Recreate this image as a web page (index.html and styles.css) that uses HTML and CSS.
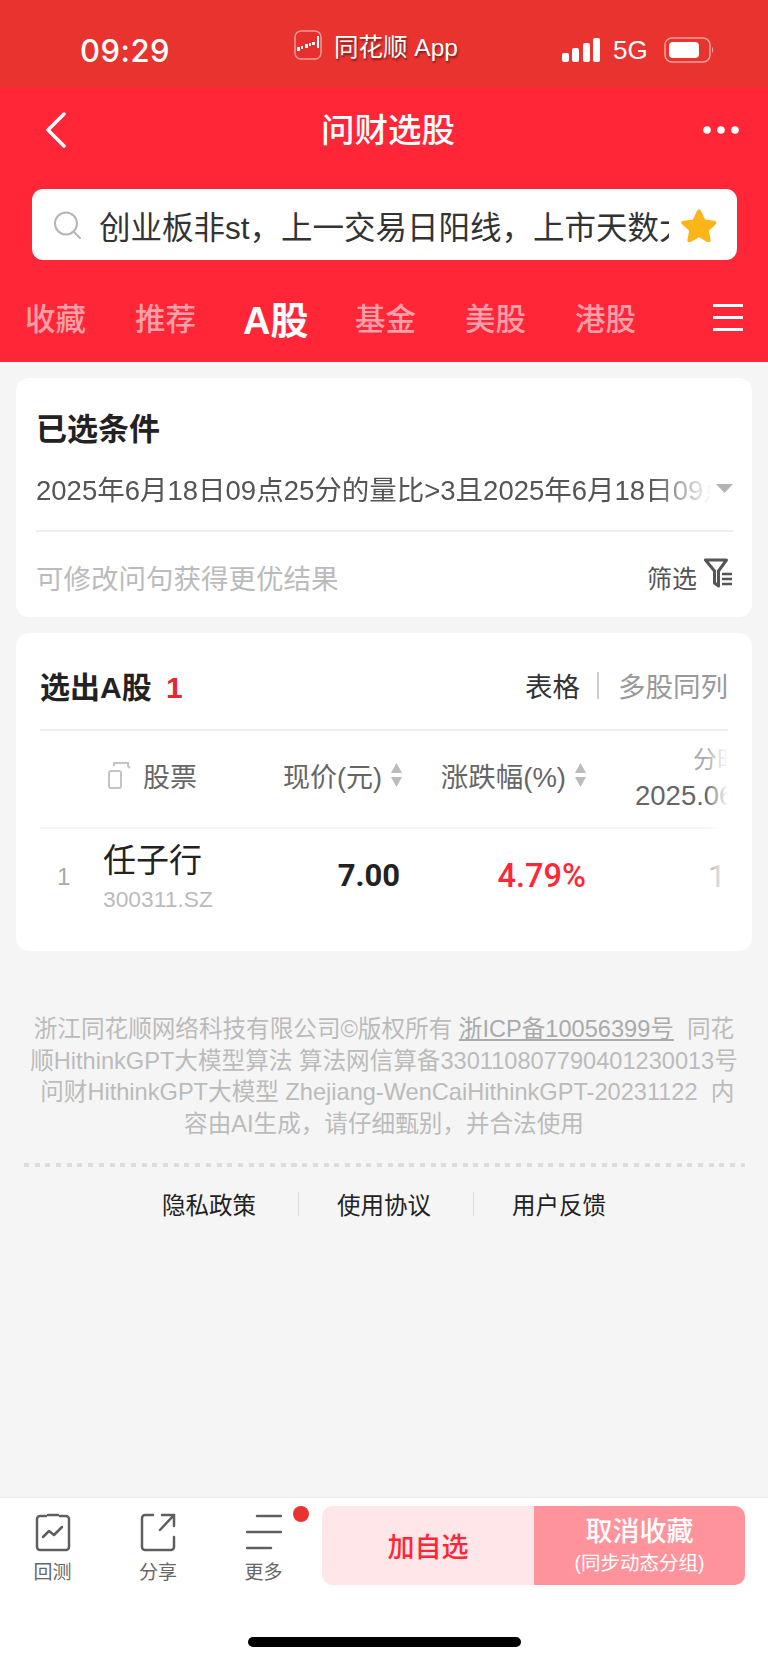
FILE: index.html
```html
<!DOCTYPE html>
<html>
<head>
<meta charset="UTF-8">
<meta name="viewport" content="width=768">
<title>问财选股</title>
<link rel="stylesheet" href="styles.css">
</head>
<body>
<div class="page">

<div class="status">
  <span class="time">09:29</span>
  <svg class="app-logo" width="28" height="30" viewBox="0 0 28 30">
    <rect x="1" y="1" width="26" height="28" rx="6" fill="#e62f2f" stroke="#f59a96" stroke-width="1.5"/>
    <g fill="#fff">
      <rect x="3" y="17" width="3" height="4"/><rect x="7" y="16" width="2" height="3"/>
      <rect x="11" y="14" width="3" height="4"/><rect x="15" y="13" width="2" height="3"/>
      <rect x="18" y="12" width="3" height="3"/><rect x="23" y="6" width="2" height="12"/>
    </g>
  </svg>
  <span class="app-name">同花顺 App</span>
  <svg class="signal" width="38" height="24" viewBox="0 0 38 24" fill="#fff">
    <rect x="0" y="15" width="7" height="9" rx="2"/>
    <rect x="10" y="10" width="7" height="14" rx="2"/>
    <rect x="21" y="5" width="7" height="19" rx="2"/>
    <rect x="31" y="0" width="7" height="24" rx="2"/>
  </svg>
  <span class="net">5G</span>
  <svg class="battery" width="50" height="26" viewBox="0 0 50 26">
    <rect x="1" y="1" width="45" height="24" rx="7" fill="none" stroke="#f6a3a0" stroke-width="1.5"/>
    <rect x="5" y="5" width="30" height="16" rx="4" fill="#fff"/>
    <path d="M48 10c1.500 .5 1.500 5.500 0 6z" fill="#f6a3a0"/>
  </svg>
</div>

<div class="top">
  <div class="nav">
    <svg class="back" width="22" height="36" viewBox="0 0 22 36"><path d="M19 2 3 18l16 16" fill="none" stroke="#fff" stroke-width="3.500" stroke-linecap="round" stroke-linejoin="round"/></svg>
    <h1 class="nav-title">问财选股</h1>
    <svg class="dots" width="36" height="8" viewBox="0 0 36 8" fill="#fff"><circle cx="4" cy="4" r="3.800"/><circle cx="18" cy="4" r="3.800"/><circle cx="32" cy="4" r="3.800"/></svg>
  </div>

  <div class="search">
    <svg class="search-icon" width="29" height="28" viewBox="0 0 29 28"><circle cx="13" cy="12.500" r="11" fill="none" stroke="#b5b5b5" stroke-width="2"/><path d="M21 21l6 6" stroke="#b5b5b5" stroke-width="2" stroke-linecap="round"/></svg>
    <div class="search-text">创业板非st，上一交易日阳线，上市天数大于</div>
    <svg class="star" width="36" height="34" viewBox="0 0 36 34"><path d="M18 1.500c1 0 1.700.6 2.200 1.700l3.800 8.300 9.300 1.200c2.200.3 2.900 2.300 1.300 3.800l-6.800 6.300 1.800 8.900c.4 2.100-1.400 3.500-3.300 2.400L18 29.300l-8.300 4.800c-1.900 1.100-3.700-.3-3.300-2.400l1.800-8.900L1.400 16.500C-.2 15-.5 13 2.700 12.700l9.300-1.200 3.800-8.300c.5-1.100 1.200-1.700 2.200-1.700z" fill="#fbb516"/></svg>
  </div>

  <div class="tabs">
    <span class="tab">收藏</span>
    <span class="tab">推荐</span>
    <span class="tab tab-on">A股</span>
    <span class="tab">基金</span>
    <span class="tab">美股</span>
    <span class="tab">港股</span>
    <svg class="tab-menu" width="30" height="28" viewBox="0 0 30 28" fill="#fff"><rect y="1" width="30" height="3"/><rect y="13" width="30" height="3"/><rect y="25" width="30" height="3"/></svg>
  </div>
</div>

<div class="card card-cond">
  <h2 class="cond-title">已选条件</h2>
  <div class="cond-row">
    <div class="cond-text">2025年6月18日09点25分的量比&gt;3且2025年6月18日09点25分</div>
    <svg class="cond-arrow" width="17" height="9" viewBox="0 0 17 9"><path d="M0 0h17l-8.500 9z" fill="#b4b4b4"/></svg>
  </div>
  <div class="cond-foot">
    <span class="hint">可修改问句获得更优结果</span>
    <span class="filter">筛选
      <svg width="29" height="30" viewBox="0 0 29 30" fill="none" stroke="#555" stroke-width="3"><path d="M1.500 2h21l-8 11v15l-4-3V13z" stroke-linejoin="round"/><path d="M18 16h10M18 21h10M18 26h10" stroke-width="2.500"/></svg>
    </span>
  </div>
</div>

<div class="card card-res">
  <div class="res-head">
    <h2 class="res-title">选出A股 <span class="res-count">1</span></h2>
    <div class="views"><span class="view-on">表格</span><i class="view-sep"></i><span class="view-off">多股同列</span></div>
  </div>

  <div class="tbl">
    <div class="tr th">
      <div></div>
      <div class="th-name">
        <svg width="23" height="27" viewBox="0 0 23 27" fill="none" stroke="#c4c4c4" stroke-width="2"><rect x="1" y="9" width="12" height="17" rx="2"/><path d="M6 4V1h14v3l2 2"/></svg>
        股票
      </div>
      <div class="th-num">现价(元)<svg class="sort" width="11" height="24" viewBox="0 0 11 24" fill="#bbb"><path d="M5.500 0 11 10H0zM0 14h11l-5.500 10z"/></svg></div>
      <div class="th-num">涨跌幅(%)<svg class="sort" width="11" height="24" viewBox="0 0 11 24" fill="#bbb"><path d="M5.500 0 11 10H0zM0 14h11l-5.500 10z"/></svg></div>
      <div class="th-time"><span class="th-time1">分时</span><span class="th-time2">2025.06.18</span></div>
    </div>
    <div class="tr td">
      <div class="idx">1</div>
      <div>
        <div class="stock">任子行</div>
        <div class="code">300311.SZ</div>
      </div>
      <div class="price">7.00</div>
      <div class="chg">4.79%</div>
      <div class="more-val">13.40</div>
    </div>
    <div class="fade"></div>
  </div>
</div>

<div class="legal">
  浙江同花顺网络科技有限公司©版权所有 <a class="icp">浙ICP备10056399号</a>&nbsp;&nbsp;同花<br>
  顺HithinkGPT大模型算法 算法网信算备330110807790401230013号<br>
  &nbsp;问财HithinkGPT大模型 Zhejiang-WenCaiHithinkGPT-20231122&nbsp;&nbsp;内<br>
  容由AI生成，请仔细甄别，并合法使用
</div>
<div class="dotline"></div>
<div class="links">
  <span>隐私政策</span><i></i><span>使用协议</span><i></i><span>用户反馈</span>
</div>

<div class="bar">
  <div class="bar-row">
    <div class="tool">
      <svg width="36" height="40" viewBox="0 0 36 40" fill="none" stroke="#5f5f5f" stroke-width="2.500"><path d="M11 4H5a3 3 0 0 0-3 3v28a3 3 0 0 0 3 3h26a3 3 0 0 0 3-3V7a3 3 0 0 0-3-3h-6M13 3h10" stroke-linecap="round"/><path d="M8 25l6-6 5 4 8-8" stroke-linejoin="round" stroke-linecap="round"/></svg>
      <span>回测</span>
    </div>
    <div class="tool">
      <svg width="36" height="40" viewBox="0 0 36 40" fill="none" stroke="#5f5f5f" stroke-width="2.500" stroke-linecap="round"><path d="M13 3H5a3 3 0 0 0-3 3v29a3 3 0 0 0 3 3h26a3 3 0 0 0 3-3V25"/><path d="M20 18 34 3M22 3h12v11"/></svg>
      <span>分享</span>
    </div>
    <div class="tool tool-more">
      <svg width="36" height="40" viewBox="0 0 36 40" fill="none" stroke="#5f5f5f" stroke-width="2.500" stroke-linecap="round"><path d="M11 4h24M1 20h34M1 36h24"/></svg>
      <span>更多</span>
      <b class="dot"></b>
    </div>
    <div class="btns">
      <div class="btn-add">加自选</div>
      <div class="btn-cancel"><strong>取消收藏</strong><small>(同步动态分组)</small></div>
    </div>
  </div>
  <div class="home"></div>
</div>

</div>
</body>
</html>
```

FILE: styles.css
```css
html, body { margin: 0; padding: 0; }
body {
    background: #f5f5f5;
    color: #333;
    font-family: "Liberation Sans", "Noto Sans CJK SC", sans-serif;
}
h1, h2 { margin: 0; font-size: inherit; font-weight: inherit; }
svg { display: block; flex: none; }

.page { display: flex; flex-direction: column; min-height: 1663px; }

/* status bar */
.status {
    display: flex;
    align-items: center;
    height: 87px;
    padding: 11px 0 0 80px;
    background: #e8332f;
    color: #fff;
    box-sizing: border-box;
}
.time { width: 92px; font-size: 31px; font-weight: 500; letter-spacing: .5px; font-family: "Inter", "Liberation Sans", sans-serif; position: relative; top: 1px; }
.app-logo { margin: 0 0 8px 122px; }
.app-name { margin: 0 0 8px 12px; width: 228px; font-size: 24.500px; text-shadow: 1px 2px 2px rgba(0, 0, 0, .45); }
.signal { margin-top: 2px; }
.net { margin-left: 13px; width: 36px; font-size: 26px; position: relative; top: 1px; }
.battery { margin: 2px 0 0 15px; }

/* red header */
.top { background: #ff2638; height: 275px; }
.nav {
    display: grid;
    grid-template-columns: 1fr auto 1fr;
    align-items: center;
    height: 86px;
    padding: 0 29px 0 45px;
}
.nav-title { color: #fff; font-size: 33.500px; font-weight: 500; margin: 0 8px 6px 0; }
.dots { justify-self: end; }

.search {
    display: flex;
    align-items: center;
    height: 71px;
    margin: 16px 31px 0 32px;
    padding: 0 20px 0 21px;
    background: #fff;
    border-radius: 11px;
}
.search-text {
    flex: 1;
    min-width: 0;
    margin: 0 12px 0 17px;
    overflow: hidden;
    white-space: nowrap;
    font-size: 31.500px;
    color: #333;
}

.tabs { display: flex; align-items: center; height: 56px; margin-top: 29px; padding-left: 25px; }
.tab { width: 110px; font-size: 30.500px; color: #ff9fa8; font-weight: 500; flex: none; }
.tab-on { color: #fff; font-size: 38px; font-weight: 700; margin-left: -2px; margin-right: 2px; }
.tab-menu { margin-left: 28px; }

/* cards */
.card { margin: 16px 16px 0; background: #fff; border-radius: 13px; }

.card-cond { height: 239px; padding: 32px 19px 0 20px; box-sizing: border-box; }
.cond-title { font-size: 31px; font-weight: 700; line-height: 40px; color: #222; }
.cond-row { display: flex; align-items: center; height: 40px; margin-top: 18px; }
.cond-text {
    flex: 1;
    min-width: 0;
    overflow: hidden;
    white-space: nowrap;
    font-size: 27.500px;
    color: #555;
    -webkit-mask-image: linear-gradient(to right, #000 91%, transparent);
    mask-image: linear-gradient(to right, #000 91%, transparent);
}
.cond-arrow { margin-left: 4px; }
.cond-foot { display: flex; justify-content: space-between; align-items: center; height: 40px; margin-top: 49px; position: relative; }
.cond-foot::before { content: ""; position: absolute; left: 0; right: 0; top: -27px; height: 2px; background: #eee; }
.hint { font-size: 27.500px; color: #bbb; }
.filter { display: flex; align-items: center; gap: 7px; font-size: 25px; color: #555; }
.filter svg { margin: -8px 0 0; }

.card-res { height: 318px; padding: 33px 24px 0; box-sizing: border-box; }
.res-head {
    display: flex;
    justify-content: space-between;
    align-items: center;
    height: 38px;
    padding-bottom: 25px;
    border-bottom: 2px solid #eee;
}
.res-title { font-size: 30px; font-weight: 700; color: #222; }
.res-count { color: #e8282f; margin-left: 6px; }
.views { display: flex; align-items: center; font-size: 27.500px; }
.view-on { color: #333; }
.view-off { color: #999; }
.view-sep { width: 2px; height: 27px; margin: 0 19px 0 17px; background: #ccc; }

.tbl { position: relative; overflow: hidden; }
.tr { display: grid; grid-template-columns: 63px 170px 129px 184px 142px; align-items: center; }
.th { height: 96px; border-bottom: 2px solid #f5f5f5; font-size: 27px; color: #666; }
.th-name { display: flex; align-items: center; gap: 12px; margin: 0 0 8px 5px; }
.th-num { display: flex; justify-content: flex-end; align-items: center; gap: 9px; white-space: nowrap; margin-bottom: 8px; }
.th-num + .th-num { font-size: 27.500px; }
.th-time { display: flex; flex-direction: column; white-space: nowrap; overflow: hidden; line-height: 36px; margin-bottom: 2px; }
.th-time1 { margin-left: 107px; color: #aaa; font-size: 24px; }
.th-time2 { margin-left: 49px; font-size: 27.500px; color: #666; }

.td { height: 122px; align-items: start; }
.idx { margin: 36px 0 0 17px; font-size: 24px; color: #aaa; line-height: 24px; }
.stock { margin-top: 11px; font-size: 33px; line-height: 42px; color: #222; }
.code { margin-top: 2px; font-size: 22.800px; line-height: 30px; color: #bbb; }
.price { margin: 26px 2px 0 0; text-align: right; font-size: 31px; font-weight: 700; line-height: 42px; color: #222; font-family: "Roboto", "Liberation Sans", sans-serif; }
.chg { margin: 26px 0 0; text-align: right; font-size: 32.500px; font-weight: 500; line-height: 42px; color: #ff2638; font-family: "Roboto", "Liberation Sans", sans-serif; }
.more-val { margin: 26px 0 0 122px; font-size: 32px; line-height: 42px; color: #aaa; white-space: nowrap; font-family: "Roboto", "Liberation Sans", sans-serif; }
.fade { position: absolute; top: 0; right: 0; bottom: 0; width: 22px; background: linear-gradient(to right, rgba(255, 255, 255, 0), #fff); }

/* legal */
.legal {
    margin-top: 63px;
    font-size: 23.600px;
    line-height: 31.500px;
    color: #bbb;
    text-align: center;
    white-space: nowrap;
}
.icp { text-decoration: underline; color: #aaa; }
.dotline {
    height: 4px;
    margin: 23px 23px 0 24px;
    background: repeating-linear-gradient(to right, #ddd 0, #ddd 5px, transparent 5px, transparent 10.700px);
}
.links { display: flex; justify-content: center; align-items: center; gap: 40px; margin-top: 21px; height: 32px; font-size: 23.500px; color: #222; }
.links i { width: 1px; height: 24px; margin: 0 -2px 0 2px; background: #ddd; }

/* bottom bar */
.bar { margin-top: auto; height: 166px; background: #fff; border-top: 1px solid #eee; box-sizing: border-box; }
.bar-row { display: flex; align-items: flex-start; height: 139px; padding: 8px 23px 0 0; box-sizing: border-box; }
.tool { position: relative; display: flex; flex-direction: column; align-items: center; width: 105px; padding-top: 6px; font-size: 19px; color: #666; flex: none; }
.tool + .tool { margin-left: .5px; }
.tool span { margin-top: 8px; line-height: 26px; }
.dot { position: absolute; top: 0; left: 82px; width: 16px; height: 16px; border-radius: 50%; background: #e8332f; }
.btns { display: flex; flex: 1; height: 79px; margin-left: 6px; border-radius: 10px; overflow: hidden; }
.btn-add { display: flex; align-items: center; justify-content: center; width: 212px; background: #ffe6e8; color: #ff2638; font-size: 27px; font-weight: 500; }
.btn-cancel { flex: 1; display: flex; flex-direction: column; align-items: center; justify-content: center; background: #ff939c; color: #fff; }
.btn-cancel strong { font-size: 27px; font-weight: 500; line-height: 34px; }
.btn-cancel small { font-size: 19.500px; line-height: 28px; }
.home { width: 273px; height: 10px; margin: 0 0 0 248px; background: #000; border-radius: 5px; }
```
